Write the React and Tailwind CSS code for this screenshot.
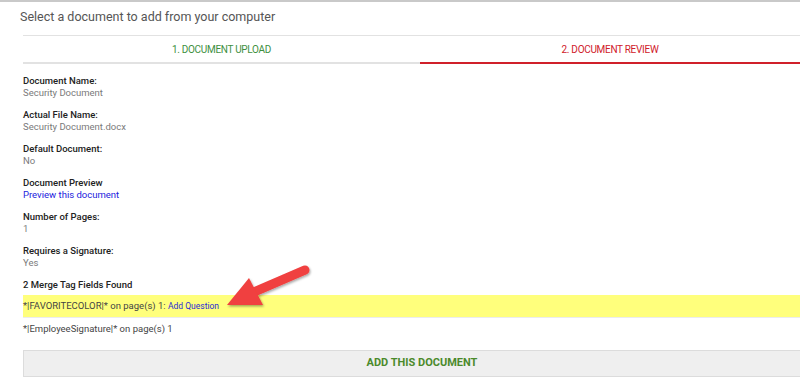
import React from "react";

const fields = [
  { label: "Document Name:", value: "Security Document" },
  { label: "Actual File Name:", value: "Security Document.docx" },
  { label: "Default Document:", value: "No" },
  { label: "Document Preview", value: "Preview this document", link: true },
  { label: "Number of Pages:", value: "1" },
  { label: "Requires a Signature:", value: "Yes" },
];

const Arrow = () => (
  <svg
    className="absolute left-[218px] top-[258px] pointer-events-none"
    width="100"
    height="56"
    viewBox="0 0 100 56"
  >
    <defs>
      <filter id="sh" x="-20%" y="-20%" width="140%" height="140%">
        <feDropShadow dx="1" dy="1.5" stdDeviation="1.2" floodColor="#000" floodOpacity="0.35" />
      </filter>
    </defs>
    <g filter="url(#sh)">
      <line x1="87" y1="10" x2="36" y2="32" stroke="#f0403f" strokeWidth="9" strokeLinecap="round" />
      <polygon points="9,45 31,18 45,45" fill="#f0403f" />
    </g>
  </svg>
);

const App = () => {
  return (
    <div
      className="relative w-[800px] h-[390px] bg-white overflow-hidden border-t-2 border-[#c9c9c9]"
      style={{ fontFamily: "Roboto, 'Liberation Sans', sans-serif" }}
    >
      <div className="pl-[20px] pt-[6px] h-[33px] text-[12.5px] text-[#555]">
        Select a document to add from your computer
      </div>

      <div className="ml-[23px] flex border-t border-b-2 border-[#e2e2e2] h-[29px] text-[10px] tracking-[-0.3px] uppercase">
        <div className="w-[397px] flex items-center justify-center text-[#3e8f3e]">
          1. Document Upload
        </div>
        <div className="flex-1 flex items-center justify-center text-[#d0202a] border-b-2 border-[#d0202a] -mb-[2px]">
          2. Document Review
        </div>
      </div>

      <div className="pl-[23px] pt-[11px]">
        {fields.map((f) => (
          <div key={f.label} className="mb-[10px] leading-[12px]">
            <div className="text-[9.5px] text-[#222] font-medium">{f.label}</div>
            <div className={`text-[9.5px] ${f.link ? "text-[#2222dd]" : "text-[#7a7a7a]"}`}>
              {f.value}
            </div>
          </div>
        ))}
        <div className="leading-[12px] text-[9.5px] text-[#222] font-medium">
          2 Merge Tag Fields Found
        </div>
      </div>

      <div className="ml-[23px] mt-[4px] h-[23px] bg-[#ffff7c] border-b border-[#ececec] flex items-center text-[9.5px] text-[#444]">
        *|FAVORITECOLOR|* on page(s) 1:&nbsp;
        <span className="text-[8.5px] text-[#2a2ad6]">Add Question</span>
      </div>

      <div className="pl-[23px] pt-[4px] text-[9.5px] text-[#444] leading-[14px]">
        *|EmployeeSignature|* on page(s) 1
      </div>

      <div className="ml-[23px] mt-[14px] w-[798px] h-[27px] bg-[#efefef] border border-[#dcdcdc] flex items-center justify-center text-[11px] font-bold text-[#4b8a2b]">
        ADD THIS DOCUMENT
      </div>

      <Arrow />
    </div>
  );
};

export default App;
